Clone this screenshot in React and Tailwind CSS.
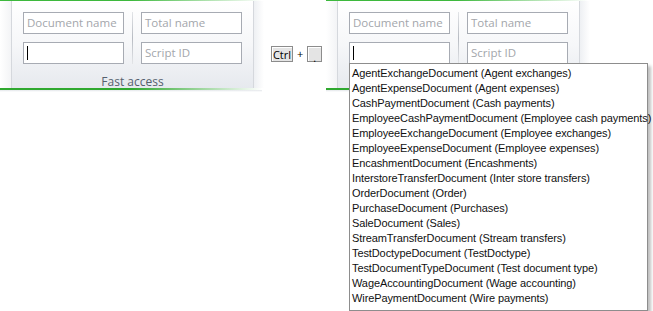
import React from "react";

const items = [
  "AgentExchangeDocument (Agent exchanges)",
  "AgentExpenseDocument (Agent expenses)",
  "CashPaymentDocument (Cash payments)",
  "EmployeeCashPaymentDocument (Employee cash payments)",
  "EmployeeExchangeDocument (Employee exchanges)",
  "EmployeeExpenseDocument (Employee expenses)",
  "EncashmentDocument (Encashments)",
  "InterstoreTransferDocument (Inter store transfers)",
  "OrderDocument (Order)",
  "PurchaseDocument (Purchases)",
  "SaleDocument (Sales)",
  "StreamTransferDocument (Stream transfers)",
  "TestDoctypeDocument (TestDoctype)",
  "TestDocumentTypeDocument (Test document type)",
  "WageAccountingDocument (Wage accounting)",
  "WirePaymentDocument (Wire payments)",
];

const Field = ({ placeholder, caret }) => (
  <div className="flex h-[22px] w-[101px] items-center whitespace-nowrap border border-[#a7abb3] bg-white px-[3px] text-[11.5px] text-[#a3a6ab]">
    {caret ? <span className="h-[14px] w-px bg-black" /> : placeholder}
  </div>
);

const Panel = ({ showLabel = true }) => (
  <div className="relative h-[92px] w-[262px] shrink-0">
    {/* green edges */}
    <div className="absolute left-0 top-0 h-px w-[262px] bg-gradient-to-r from-[#3db83d] via-[#3db83d] to-transparent" />
    <div className="absolute left-0 top-[88px] h-[2px] w-[262px] bg-gradient-to-r from-[#2fa82f] via-[#2fa82f] to-transparent" />
    <div className="absolute left-0 top-[90px] h-[2px] w-[262px] bg-gradient-to-b from-[#e4e6ea] to-white" />
    {/* side fades */}
    <div className="absolute left-0 top-px h-[87px] w-[11px] bg-gradient-to-r from-white to-[#f3f4f6]" />
    <div className="absolute left-[254px] top-px h-[87px] w-[10px] bg-gradient-to-r from-[#eef0f3] to-white" />
    {/* body */}
    <div className="absolute left-[11px] top-px flex h-[87px] w-[243px] flex-col border-x border-[#d5d8dd] bg-gradient-to-b from-white via-[#f6f7f9] to-[#e6e9ee]">
      <div className="flex items-stretch pl-[11px] pt-[11px]">
        <div className="flex flex-col gap-[8px]">
          <Field placeholder="Document name" />
          <Field caret />
        </div>
        <div className="mx-[8px] w-px bg-gradient-to-b from-[#e3e5e8] via-[#b8bcc3] to-[#e3e5e8]" />
        <div className="flex flex-col gap-[8px]">
          <Field placeholder="Total name" />
          <Field placeholder="Script ID" />
        </div>
      </div>
      <div className="mt-[11px] h-[14px] text-center text-[12px] leading-[14px] text-[#55606e]">
        {showLabel ? "Fast access" : ""}
      </div>
    </div>
  </div>
);

const Key = ({ children, w }) => (
  <div className={`flex h-[16px] ${w} items-center justify-center border border-[#8c8c8c] bg-[#e4e4e4] text-[11px] leading-none text-black shadow-[inset_1px_1px_0_#fff]`}>
    {children}
  </div>
);

export default function App() {
  return (
    <div
      className="relative h-[311px] w-[653px] overflow-hidden bg-white"
      style={{ fontFamily: '"Open Sans", "Liberation Sans", sans-serif' }}
    >
      <div className="flex">
        <Panel />
        <div className="flex w-[64px] shrink-0 items-start pl-[9px] pt-[46px]">
          <div className="flex items-center gap-[4px]">
            <Key w="w-[22px]">Ctrl</Key>
            <span className="text-[11px] text-black">+</span>
            <Key w="w-[15px]">
              <span className="mt-[6px]">.</span>
            </Key>
          </div>
        </div>
        <Panel showLabel={false} />
      </div>

      {/* dropdown list */}
      <div
        className="absolute left-[349px] top-[63px] w-[299px] border border-[#8d8d8d] bg-white pb-[4px] pl-[2px] pt-[2px] shadow-[3px_3px_3px_rgba(0,0,0,0.25)]"
        style={{ fontFamily: '"Liberation Sans", Arial, sans-serif' }}
      >
        {items.map((it) => (
          <div key={it} className="h-[15px] whitespace-nowrap text-[11px] leading-[15px] tracking-[-0.1px] text-[#111]">
            {it}
          </div>
        ))}
      </div>
    </div>
  );
}
